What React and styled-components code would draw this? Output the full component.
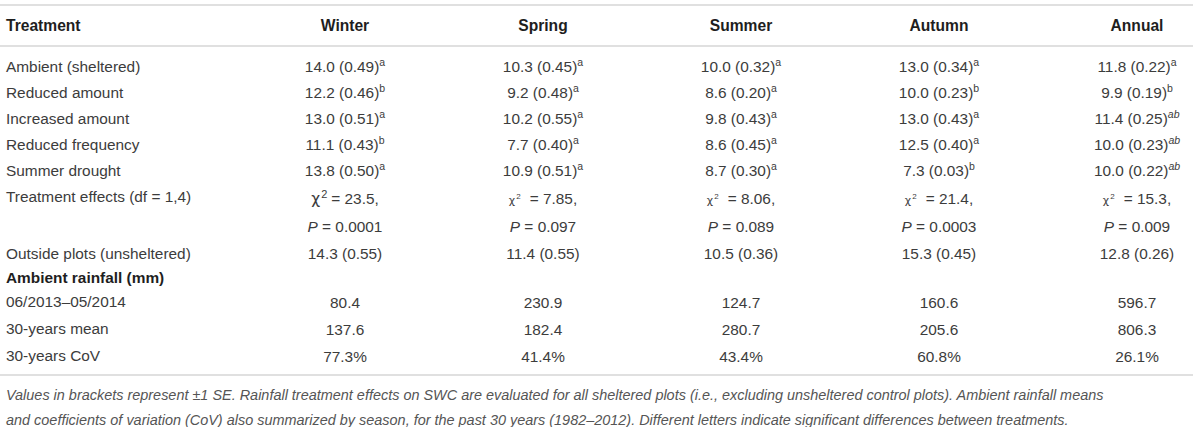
import styled, { createGlobalStyle } from "styled-components";

const GlobalStyles = createGlobalStyle`
  html, body {
    margin: 0;
    padding: 0;
    background: #fff;
    overflow: hidden;
  }
  body {
    font-family: "Liberation Sans", Arial, sans-serif;
  }
`;

const seasons = ["Winter", "Spring", "Summer", "Autumn", "Annual"];

const treatments = [
  ["Ambient (sheltered)", [["14.0 (0.49)", "a"], ["10.3 (0.45)", "a"], ["10.0 (0.32)", "a"], ["13.0 (0.34)", "a"], ["11.8 (0.22)", "a"]]],
  ["Reduced amount", [["12.2 (0.46)", "b"], ["9.2 (0.48)", "a"], ["8.6 (0.20)", "a"], ["10.0 (0.23)", "b"], ["9.9 (0.19)", "b"]]],
  ["Increased amount", [["13.0 (0.51)", "a"], ["10.2 (0.55)", "a"], ["9.8 (0.43)", "a"], ["13.0 (0.43)", "a"], ["11.4 (0.25)", "ab", true]]],
  ["Reduced frequency", [["11.1 (0.43)", "b"], ["7.7 (0.40)", "a"], ["8.6 (0.45)", "a"], ["12.5 (0.40)", "a"], ["10.0 (0.23)", "ab", true]]],
  ["Summer drought", [["13.8 (0.50)", "a"], ["10.9 (0.51)", "a"], ["8.7 (0.30)", "a"], ["7.3 (0.03)", "b"], ["10.0 (0.22)", "ab", true]]],
];

const effects = [
  ["23.5", "0.0001", true],
  ["7.85", "0.097"],
  ["8.06", "0.089"],
  ["21.4", "0.0003"],
  ["15.3", "0.009"],
];

const outside = ["14.3 (0.55)", "11.4 (0.55)", "10.5 (0.36)", "15.3 (0.45)", "12.8 (0.26)"];

const rainfall = [
  ["06/2013–05/2014", ["80.4", "230.9", "124.7", "160.6", "596.7"]],
  ["30-years mean", ["137.6", "182.4", "280.7", "205.6", "806.3"]],
  ["30-years CoV", ["77.3%", "41.4%", "43.4%", "60.8%", "26.1%"]],
];

function App() {
  return (
    <>
      <GlobalStyles />
      <Figure>
        <Table>
          <HeadRow>
            <HeadCell $left>Treatment</HeadCell>
            {seasons.map((s) => (
              <HeadCell key={s}>{s}</HeadCell>
            ))}
          </HeadRow>

          <Body>
            {treatments.map(([label, vals]) => (
              <Row key={label}>
                <Label>{label}</Label>
                {vals.map(([v, letter, italic], i) => (
                  <Cell key={i}>
                    {v}
                    <Sup $italic={italic}>{letter}</Sup>
                  </Cell>
                ))}
              </Row>
            ))}

            <Row $tall>
              <Label>Treatment effects (df = 1,4)</Label>
              {effects.map(([chi, p, big], i) => (
                <Cell key={i}>
                  <Line>
                    <Chi $big={big}>
                      χ<ChiSup $big={big}>2</ChiSup>
                    </Chi>
                    <Eq $wide={!big}>= {chi},</Eq>
                  </Line>
                  <Line>
                    <Italic>P</Italic> = {p}
                  </Line>
                </Cell>
              ))}
            </Row>

            <Row>
              <Label>Outside plots (unsheltered)</Label>
              {outside.map((v, i) => (
                <Cell key={i}>{v}</Cell>
              ))}
            </Row>

            <SectionRow>
              <SectionTitle>Ambient rainfall (mm)</SectionTitle>
            </SectionRow>

            {rainfall.map(([label, vals]) => (
              <Row key={label} $loose>
                <Label>{label}</Label>
                {vals.map((v, i) => (
                  <Cell key={i}>{v}</Cell>
                ))}
              </Row>
            ))}
          </Body>
        </Table>

        <Caption>
          Values in brackets represent ±1 SE. Rainfall treatment effects on SWC are evaluated for all sheltered plots (i.e., excluding unsheltered control plots). Ambient rainfall means
          <br />
          and coefficients of variation (CoV) also summarized by season, for the past 30 years (1982–2012). Different letters indicate significant differences between treatments.
        </Caption>
      </Figure>
    </>
  );
}

const Figure = styled.div`
  width: 1193px;
  padding-top: 4px;
`;

const Table = styled.div`
  border-top: 2px solid #e0e0e0;
  border-bottom: 2px solid #e0e0e0;
`;

const columns = `
  display: grid;
  grid-template-columns: 246px repeat(5, 198px);
  align-items: center;
`;

const HeadRow = styled.div`
  ${columns}
  height: 39px;
  border-bottom: 2px solid #e0e0e0;
`;

const HeadCell = styled.div`
  font-size: 15.6px;
  font-weight: bold;
  color: #1e1e1e;
  text-align: ${({ $left }) => ($left ? "left" : "center")};
  padding-left: ${({ $left }) => ($left ? "6px" : "0")};
`;

const Body = styled.div`
  padding: 7px 0 4px;
`;

const Row = styled.div`
  ${columns}
  height: ${({ $tall, $loose }) => ($tall ? "57px" : $loose ? "27px" : "26px")};
  font-size: 15.4px;
  color: #3c3c3c;
  line-height: ${({ $tall }) => ($tall ? "28px" : "20px")};
`;

const Label = styled.div`
  padding-left: 6px;
  align-self: start;
  line-height: 26px;
  white-space: nowrap;
`;

const Cell = styled.div`
  text-align: center;
  white-space: nowrap;
`;

const Sup = styled.sup`
  font-size: 10.5px;
  line-height: 0;
  vertical-align: 6px;
  font-style: ${({ $italic }) => ($italic ? "italic" : "normal")};
`;

const Line = styled.div`
  height: 28px;
`;

const Chi = styled.span`
  font-size: ${({ $big }) => ($big ? "15.4px" : "11px")};
  font-family: "DejaVu Sans", sans-serif;
`;

const ChiSup = styled.sup`
  font-size: ${({ $big }) => ($big ? "11px" : "8px")};
  font-family: "Liberation Sans", Arial, sans-serif;
  line-height: 0;
  vertical-align: ${({ $big }) => ($big ? "6px" : "5px")};
  margin-left: 1px;
`;

const Eq = styled.span`
  margin-left: ${({ $wide }) => ($wide ? "9px" : "4px")};
`;

const Italic = styled.span`
  font-style: italic;
`;

const SectionRow = styled.div`
  height: 22px;
  display: flex;
  align-items: center;
`;

const SectionTitle = styled.div`
  padding-left: 6px;
  font-size: 15.4px;
  font-weight: bold;
  color: #1e1e1e;
  line-height: 20px;
`;

const Caption = styled.p`
  margin: 0;
  padding: 7px 0 0 6px;
  font-size: 14.45px;
  line-height: 25px;
  font-style: italic;
  color: #555;
  white-space: nowrap;
`;

export default App;
